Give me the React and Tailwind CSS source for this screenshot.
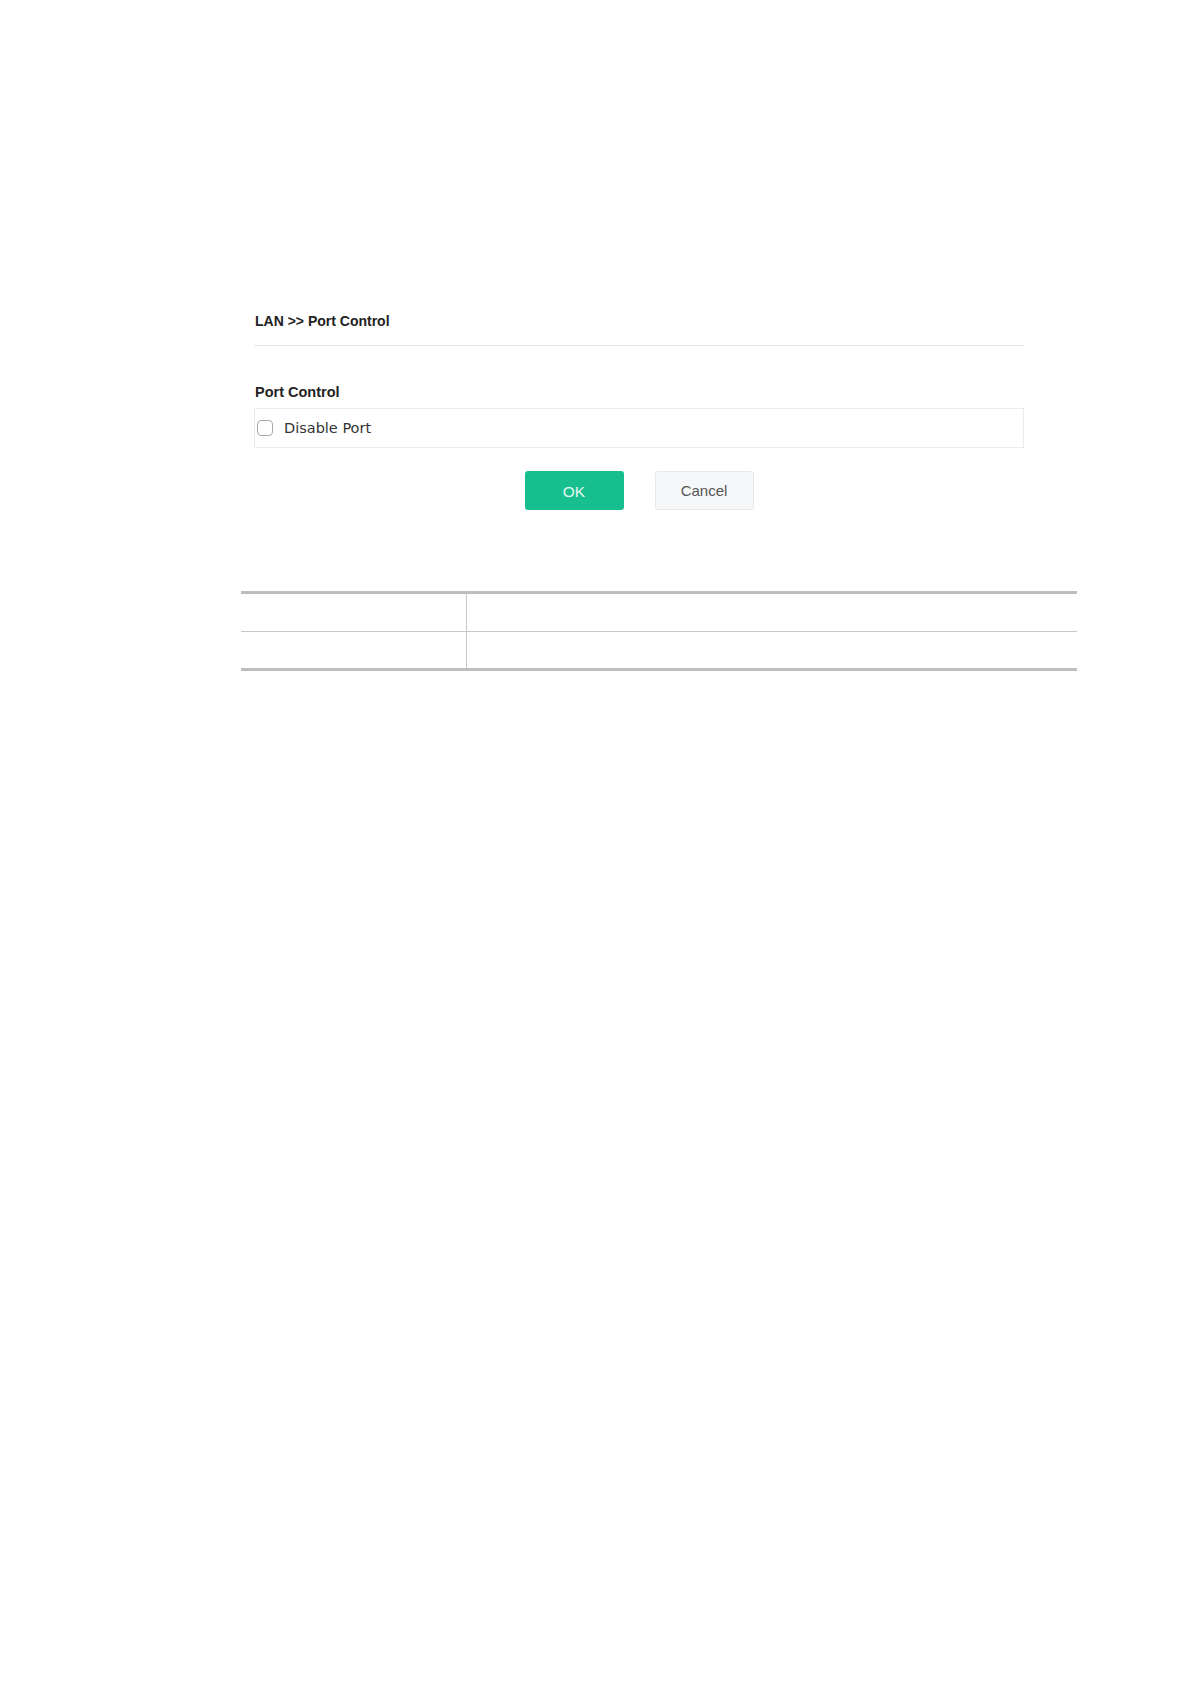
export default function App() {
  return (
    <div className="w-[1190px] h-[1684px] bg-white" style={{ fontFamily: '"Liberation Sans", Arial, sans-serif' }}>
      <div className="pt-[311px] ml-[254px] w-[770px]">
        <div className="pl-[1px] h-[20px] leading-[20px] text-[14px] font-bold text-[#222]">LAN &gt;&gt; Port Control</div>
        <div className="mt-[14px] h-px bg-[#e6e6e6]" />
        <div className="mt-[36px] pl-[1px] h-[20px] leading-[20px] text-[14.5px] font-bold text-[#222]">Port Control</div>
        <div className="mt-[6px] h-[40px] border border-[#ebebeb] flex items-center pl-[2px] gap-[11px]">
          <div className="w-[16px] h-[16px] rounded-[4px] border border-[#a8a8a8] bg-white" />
          <span className="text-[14.5px] text-[#333] pt-[1px]" style={{ fontFamily: '"DejaVu Sans", Verdana, sans-serif' }}>Disable Port</span>
        </div>
        <div className="mt-[23px] flex justify-center gap-[31px]">
          <button className="w-[99px] h-[39px] pt-[2px] rounded-[3px] bg-[#17bf8f] text-[#e6f8f0] text-[15.5px]">OK</button>
          <button className="w-[99px] h-[39px] pt-[2px] rounded-[3px] bg-[#f6f7f9] border border-[#e8e8e8] text-[#555] text-[15px]">Cancel</button>
        </div>
      </div>
      <div className="mt-[81px] ml-[241px] w-[836px] border-t-[3px] border-b-[3px] border-[#bdbdbd]">
        <div className="flex h-[38px] border-b border-[#c8c8c8]">
          <div className="w-[226px] border-r border-[#c8c8c8]" />
          <div className="flex-1" />
        </div>
        <div className="flex h-[36px]">
          <div className="w-[226px] border-r border-[#c8c8c8]" />
          <div className="flex-1" />
        </div>
      </div>
    </div>
  );
}
